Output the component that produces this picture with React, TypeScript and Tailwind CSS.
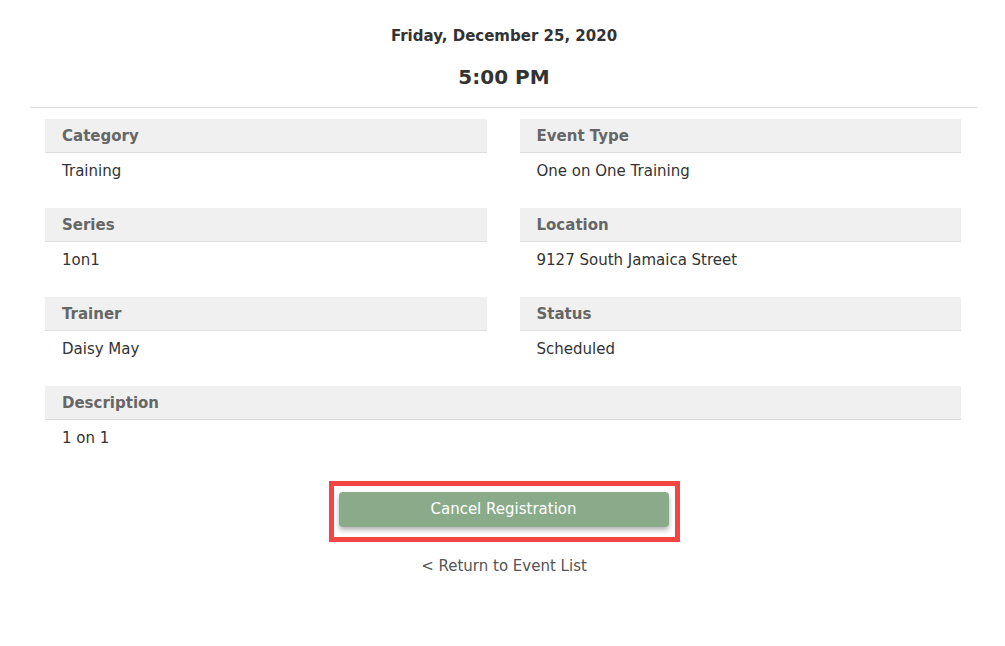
import React from "react";

type Field = { label: string; value: string };

const fields: Field[] = [
  { label: "Category", value: "Training" },
  { label: "Event Type", value: "One on One Training" },
  { label: "Series", value: "1on1" },
  { label: "Location", value: "9127 South Jamaica Street" },
  { label: "Trainer", value: "Daisy May" },
  { label: "Status", value: "Scheduled" },
];

function FieldBlock({ label, value }: Field) {
  return (
    <div className="h-[89px]">
      <div className="flex h-[34px] items-center border-b border-[#dddddd] bg-[#f0f0f0] px-[17px] pt-[2px] text-[15px] font-bold text-[#666666]">
        {label}
      </div>
      <div className="px-[17px] pt-[8px] text-[15px] leading-[20px] text-[#333333]">
        {value}
      </div>
    </div>
  );
}

export default function App() {
  return (
    <div
      className="min-h-[646px] bg-white"
      style={{ fontFamily: '"DejaVu Sans", Verdana, sans-serif' }}
    >
      <div className="ml-[30px] mr-[27px]">
        <div className="pt-[26px] text-center">
          <div className="text-[15px] font-bold leading-[20px] text-[#333333]">
            Friday, December 25, 2020
          </div>
          <div className="mt-[18px] text-[20px] font-bold leading-[26px] text-[#333333]">
            5:00 PM
          </div>
        </div>
        <div className="mt-[17px] border-t border-[#e0e0e0]" />
        <div className="pl-[15px] pr-[17px] pt-[11px]">
          <div className="grid grid-cols-2 gap-x-[33px]">
            {fields.map((f) => (
              <FieldBlock key={f.label} {...f} />
            ))}
          </div>
          <FieldBlock label="Description" value="1 on 1" />
        </div>
        <div className="mt-[6px] flex flex-col items-center">
          <div className="border-[5px] border-[#f44545] pb-[10px] pl-[5px] pr-[6px] pt-[6px]">
            <button className="h-[35px] w-[330px] rounded-[4px] bg-[#8aab8a] text-[15px] text-white shadow-[0_3px_5px_rgba(0,0,0,0.3)]">
              Cancel Registration
            </button>
          </div>
          <a className="mt-[14px] cursor-pointer text-[15px] leading-[20px] text-[#555555]">
            &lt; Return to Event List
          </a>
        </div>
      </div>
    </div>
  );
}
